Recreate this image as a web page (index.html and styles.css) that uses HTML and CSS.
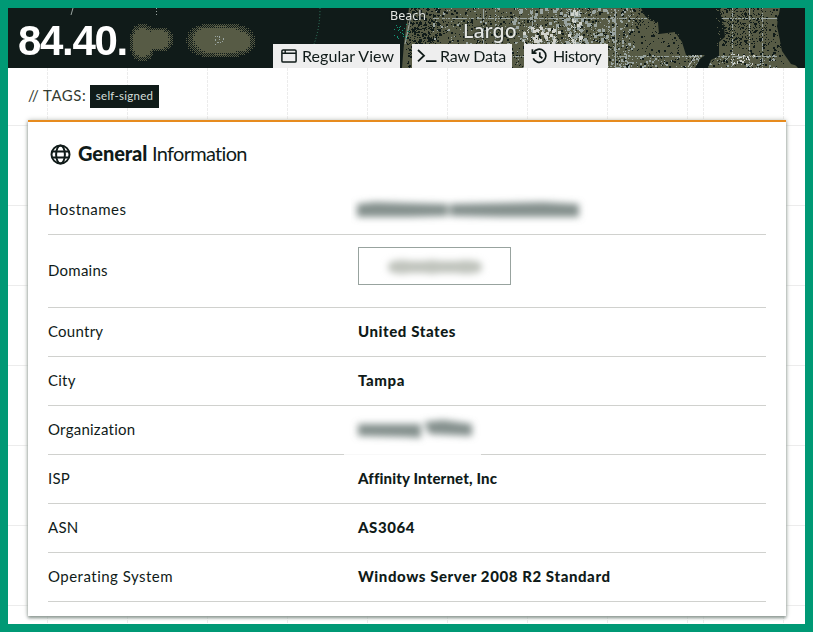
FILE: index.html
```html
<!DOCTYPE html>
<html lang="en">
<head>
<meta charset="utf-8">
<title>Host Information</title>
<link rel="stylesheet" href="styles.css">
</head>
<body>
<header class="hero">
  <canvas class="map" id="map" width="797" height="60"></canvas>
  <span class="place beach">Beach</span>
  <span class="place largo">Largo</span>
  <h1 class="address">84.40.</h1>
  <nav class="tabs">
    <a class="tab regular"><svg width="16" height="14" viewBox="0 0 16 14"><rect x=".9" y=".9" width="14.2" height="12.2" rx="1.2" fill="none" stroke="#101b19" stroke-width="1.5"/><path d="M1 4.3H15M4.2 1V4" stroke="#101b19" stroke-width="1.4"/></svg><span>Regular View</span></a>
    <a class="tab raw"><svg width="20" height="14" viewBox="0 0 20 14"><path d="M1 1L7 6.7L1 12.4M9 12.2H19.5" fill="none" stroke="#101b19" stroke-width="1.8"/></svg><span>Raw Data</span></a>
    <a class="tab history"><svg width="17" height="16" viewBox="0 0 17 16"><path d="M2.4 4.8A6.6 6.6 0 1 1 2.2 10.4M1.4 1.2V5.2H5.5M8.8 4.3V8.3L11.4 10.2" fill="none" stroke="#101b19" stroke-width="1.7"/></svg><span>History</span></a>
  </nav>
</header>
<main class="page">
  <div class="tags"><span class="tags-label">// TAGS:</span><span class="tag">self-signed</span></div>
  <section class="card">
    <h2 class="title"><svg width="21" height="21" viewBox="0 0 21 21"><g fill="none" stroke="#101b19" stroke-width="2"><circle cx="10.5" cy="10.5" r="9"/><ellipse cx="10.5" cy="10.5" rx="4.4" ry="9"/><path d="M2.3 7.4H18.7M2.3 13.6H18.7"/></g></svg><b>General</b><span>Information</span></h2>
    <dl class="rows">
      <div class="row"><dt class="roomy">Hostnames</dt><dd><svg class="smudge" width="240" height="32" viewBox="0 0 240 32"><defs><filter id="soft" x="-20%" y="-100%" width="140%" height="300%"><feGaussianBlur stdDeviation="3.8"/></filter></defs><g filter="url(#soft)" fill="#84908d"><path d="M6 10L24 8L58 9L97 10V22L58 23L6 23Z"/><path d="M99 10L150 9L192 8L228 10V23H150L99 22Z"/></g></svg></dd></div>
      <div class="row domains"><dt>Domains</dt><dd><div class="domain"><svg width="110" height="28" viewBox="0 0 110 28"><g filter="url(#soft)" fill="#bfc3bc"><rect x="8" y="9" width="94" height="12" rx="6"/><ellipse cx="22" cy="15" rx="14" ry="7"/><ellipse cx="52" cy="15" rx="13" ry="7"/><ellipse cx="86" cy="15" rx="16" ry="7"/></g></svg></div></dd></div>
      <div class="row"><dt>Country</dt><dd class="wide">United States</dd></div>
      <div class="row"><dt>City</dt><dd class="wide">Tampa</dd></div>
      <div class="row org"><dt>Organization</dt><dd><svg class="smudge" width="137" height="40" viewBox="0 0 137 40"><g filter="url(#soft)" fill="#84908d"><path d="M13 14H76V28L60 27L13 26Z"/><path d="M79 12L98 10L127 14V26L84 24Z"/></g></svg></dd></div>
      <div class="row"><dt>ISP</dt><dd class="provider">Affinity Internet, Inc</dd></div>
      <div class="row"><dt>ASN</dt><dd class="wide">AS3064</dd></div>
      <div class="row"><dt class="roomy">Operating System</dt><dd class="wide">Windows Server 2008 R2 Standard</dd></div>
    </dl>
  </section>
</main>
<script src="map.js"></script>
</body>
</html>
```
FILE: styles.css
```css
* { box-sizing: border-box; }
body { margin: 0; width: 813px; height: 632px; border: 8px solid #009975; background: #fff; color: #101b19; font-family: Lato, sans-serif; overflow: hidden; }
.hero { position: relative; height: 60px; background: #101b19; display: flex; justify-content: space-between; align-items: flex-end; }
.map { position: absolute; inset: 0; }
.place { position: absolute; font-family: "Noto Sans", sans-serif; color: #e4e6e2; line-height: 1; text-shadow: 0 0 1px #101b19, 0 0 2px #101b19; }
.beach { left: 382px; top: 2px; font-size: 12.5px; }
.largo { left: 455px; top: 13px; font-size: 19.5px; font-weight: 500; }
.address { position: relative; margin: 0 0 6px 10px; font: bold 42px/42px "Liberation Sans", sans-serif; letter-spacing: -1.3px; color: #fff; }
.tabs { position: relative; display: flex; gap: 12px; margin-right: 197px; }
.tab { height: 24px; padding-left: 8px; display: flex; align-items: center; background: #eeeeee; font-size: 16px; white-space: nowrap; }
.tab span { margin-top: -2px; }
.regular { width: 127px; gap: 5px; letter-spacing: .05px; }
.raw { width: 100px; padding-left: 5px; gap: 3px; letter-spacing: -.2px; }
.history { width: 84px; gap: 5px; padding-left: 7px; letter-spacing: -.5px; }
.page { height: 556px; padding: 17px 19px 0 20px;
  background:
    repeating-linear-gradient(180deg, transparent 0 3px, #fff 3px 4px),
    linear-gradient(#ececec, #ececec) 695px 0 / 1px 100% no-repeat,
    linear-gradient(#ececec, #ececec) 775px 0 / 1px 100% no-repeat,
    linear-gradient(#fff, #fff) 759px 0 / 1px 100% no-repeat,
    linear-gradient(90deg, transparent 39px, #ececec 39px 40px, transparent 40px) 0 0 / 80px 100%,
    linear-gradient(180deg, transparent 57px, #ececec 57px 58px, transparent 58px) 0 0 / 100% 80px; }
.tags { display: flex; height: 23px; align-items: center; }
.tags-label { width: 62px; font-size: 15px; letter-spacing: .5px; white-space: nowrap; color: #343c32; margin-top: -3px; }
.tag { width: 69px; height: 23px; background: #101b19; color: #d5dfdb; font-size: 11.5px; line-height: 22px; text-align: center; letter-spacing: .25px; }
.card { margin-top: 12px; height: 496px; padding: 20px 20px 0; border-top: 2px solid #e78b1e; background: #fff; box-shadow: 0 2px 3px #8c9893, 0 0 5px #bfc2bd; }
.title { height: 24px; margin: 0 0 19px 2px; display: flex; align-items: center; font-size: 20px; line-height: 24px; font-weight: 400; }
.title b { margin: -2px 0 0 7px; width: 74px; font-weight: 900; letter-spacing: -.1px; }
.title span { letter-spacing: -.7px; margin-top: -2px; }
.rows { margin: 0; }
.row { height: 49px; border-bottom: 1px solid #d0d1ce; display: grid; grid-template-columns: 310px 1fr; align-items: center; font-size: 15px; letter-spacing: .25px; }
.row:first-child { height: 50px; }
.domains { height: 73px; }
.org { border-image: linear-gradient(90deg, #d0d1ce 296px, #f8f8f8 296px 433px, #d0d1ce 433px) 1; border-style: solid; border-width: 0 0 1px; }
dt { position: relative; top: -1px; }
.roomy { letter-spacing: .48px; }
dd { margin: 0; font-weight: 900; letter-spacing: .1px; }
.wide, .provider { margin-top: -2px; }
.wide { letter-spacing: .58px; }
.provider { letter-spacing: .15px; }
.smudge { display: block; margin-left: -7px; }
.org .smudge { margin-left: -13px; }
.domain { width: 153px; height: 38px; margin-bottom: 10px; border: 1px solid #98a39f; display: flex; align-items: center; justify-content: center; }
.domain svg { display: block; }
```
FILE: map.js
```js
const canvas = document.getElementById('map');
const ctx = canvas.getContext('2d');
let seed = 8140;
function random() {
  seed = (seed + 0x6D2B79F5) | 0;
  let t = Math.imul(seed ^ (seed >>> 15), 1 | seed);
  t = (t + Math.imul(t ^ (t >>> 7), 61 | t)) ^ t;
  return ((t ^ (t >>> 14)) >>> 0) / 4294967296;
}
const dark = '#101b19', land = '#575b45', pale = '#9aa5a1', white = '#d1d4ce';
function polygon(points, color) {
  ctx.fillStyle = color;
  ctx.beginPath();
  points.forEach(([x, y], i) => i ? ctx.lineTo(x, y) : ctx.moveTo(x, y));
  ctx.closePath();
  ctx.fill();
}
function speckle(x, y, w, h, count, color, size) {
  ctx.fillStyle = color;
  for (let i = 0; i < count; i++) {
    const s = random() < .25 ? size : 1;
    ctx.fillRect(x + Math.floor(random() * w), y + Math.floor(random() * h), s, s);
  }
}
ctx.fillStyle = dark;
ctx.fillRect(0, 0, 797, 60);
polygon([[401,0],[772,0],[769,18],[774,42],[790,60],[394,60],[396,35]], land);
speckle(398, 0, 378, 60, 1500, dark, 2);
speckle(400, 0, 32, 60, 420, dark, 2);
speckle(704, 0, 55, 38, 380, dark, 1);
speckle(425, 0, 200, 60, 300, pale, 2);
speckle(505, 0, 100, 36, 220, pale, 3);
speckle(515, 18, 38, 18, 75, white, 3);
speckle(556, 0, 18, 40, 110, pale, 3);
speckle(560, 0, 14, 36, 50, white, 3);
speckle(600, 0, 26, 60, 130, pale, 2);
speckle(612, 47, 158, 13, 150, pale, 2);
speckle(722, 46, 25, 12, 45, white, 2);
ctx.fillStyle = pale;
for (const x of [475,487,524,548,566,607,690,724,741,754]) {
  for (let y = 0; y < 60; y++) if (random() < .6) ctx.fillRect(x, y, 1, 1);
}
for (const y of [10,48]) {
  for (let x = 425; x < 770; x++) if (random() < .75) ctx.fillRect(x, y, 1, 1);
}
polygon([[633,0],[637,8],[643,13],[650,14],[651,26],[667,24],[674,34],[678,47],[697,47],[692,51],[687,60],[700,60],[703,52],[711,48],[711,34],[717,29],[716,18],[713,8],[712,0]], dark);
polygon([[776,0],[769,9],[771,24],[774,43],[783,56],[797,60],[797,0]], dark);
speckle(630, 6, 16, 16, 25, land, 1);
speckle(650, 25, 22, 20, 45, land, 1);
speckle(708, 0, 7, 44, 24, land, 1);
ctx.strokeStyle = white;
ctx.beginPath(); ctx.moveTo(688,47); ctx.lineTo(680,59); ctx.stroke();
ctx.strokeStyle = pale;
ctx.beginPath(); ctx.moveTo(607.5,5); ctx.lineTo(607.5,60); ctx.moveTo(403,8); ctx.lineTo(397,36); ctx.stroke();
ctx.setLineDash([1,2]);
ctx.strokeStyle = '#348066';
ctx.beginPath(); ctx.moveTo(312,0); ctx.quadraticCurveTo(312,20,306,36); ctx.stroke();
speckle(386, 15, 16, 21, 24, '#139374', 1);
ctx.strokeStyle = pale;
ctx.beginPath(); ctx.moveTo(148.5,0); ctx.lineTo(148.5,8); ctx.stroke();
ctx.setLineDash([]);
ctx.beginPath(); ctx.moveTo(65,0); ctx.lineTo(63,7); ctx.stroke();
function blob(spots, x0, x1) {
  for (let y = 14; y < 54; y++) {
    for (let x = x0; x < x1; x++) {
      let v = 0;
      for (const [cx, cy, rx, ry] of spots) {
        const d = Math.pow(Math.abs(x - cx) / rx, 2.5) + Math.pow(Math.abs(y - cy) / ry, 2.5);
        v = Math.max(v, 1 - d);
      }
      const threshold = [[.05,.45],[.6,.2]][y & 1][x & 1];
      if (v > threshold) { ctx.fillStyle = land; ctx.fillRect(x, y, 1, 1); }
    }
  }
}
blob([[134,34,13,19],[149,31,16,13]], 118, 168);
blob([[212,32,35,18],[199,30,19,14],[228,33,19,14]], 176, 250);
speckle(207, 28, 9, 9, 18, pale, 1);
```
